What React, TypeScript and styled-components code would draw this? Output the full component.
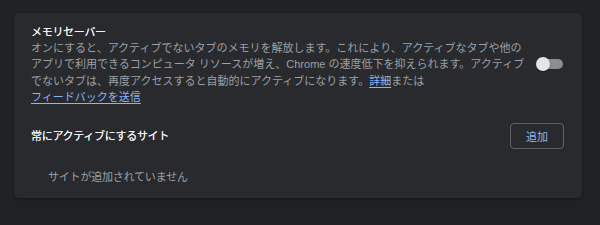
import React from 'react';
import styled, { createGlobalStyle } from 'styled-components';

const GlobalStyle = createGlobalStyle`
  html, body {
    margin: 0;
    padding: 0;
    background: #202124;
  }
  body {
    font-family: "Liberation Sans", "Noto Sans CJK JP", sans-serif;
    -webkit-font-smoothing: antialiased;
  }
`;

const Page = styled.div`
  width: 600px;
  height: 225px;
  padding: 13px 18px 0 14px;
  box-sizing: border-box;
  background: #202124;
`;

const Card = styled.section`
  background: #292a2d;
  border-radius: 5px;
  box-shadow: 0 1px 3px rgba(0, 0, 0, 0.35);
  padding: 0 17px 0 17px;
`;

const Row = styled.div<{ $minHeight?: number }>`
  display: flex;
  align-items: center;
  min-height: ${(p) => p.$minHeight ?? 0}px;
`;

const TopRow = styled(Row)`
  padding: 10px 0;
`;

const TextBlock = styled.div`
  flex: 1;
  min-width: 0;
  font-size: 11px;
  line-height: 16.5px;
`;

const Title = styled.div`
  color: #f1f3f4;
  font-weight: 400;
  padding-top: 1px;
  margin-bottom: -1px;
  letter-spacing: -0.3px;
  text-shadow: 0 0 0.3px #f1f3f4;
`;

const Desc = styled.div`
  color: #9aa0a6;
  white-space: nowrap;
`;

const Link = styled.a`
  color: #8ab4f8;
  text-decoration: underline;
  text-underline-offset: 2px;
  cursor: pointer;
`;

const Toggle = styled.div`
  position: relative;
  flex-shrink: 0;
  width: 26px;
  height: 10px;
  border-radius: 5px;
  background: #8a8d91;
  margin-left: 12px;
  margin-right: 2px;
`;

const Knob = styled.span`
  position: absolute;
  left: -1px;
  top: -2px;
  width: 14px;
  height: 14px;
  border-radius: 50%;
  background: #e3e5e8;
  box-shadow: 0 1px 2px rgba(0, 0, 0, 0.3);
`;

const Label = styled.div`
  flex: 1;
  color: #f1f3f4;
  font-size: 11px;
  line-height: 16.5px;
  padding-top: 2px;
  letter-spacing: -0.3px;
  text-shadow: 0 0 0.3px #f1f3f4;
`;

const AddButton = styled.button`
  flex-shrink: 0;
  width: 54px;
  height: 26px;
  margin-right: 1px;
  background: transparent;
  border: 1px solid #5f6368;
  border-radius: 4px;
  color: #8ab4f8;
  font-family: "Noto Sans CJK JP", sans-serif;
  font-size: 11px;
  font-weight: 400;
  padding: 0;
  cursor: pointer;
`;

const Empty = styled.div`
  padding: 13px 0 13px 17px;
  color: #9aa0a6;
  font-size: 11px;
  line-height: 16.5px;
  letter-spacing: -0.2px;
`;

const App: React.FC = () => {
  return (
    <>
      <GlobalStyle />
      <Page>
        <Card>
          <TopRow>
            <TextBlock>
              <Title>メモリセーバー</Title>
              <Desc>
                オンにすると、アクティブでないタブのメモリを解放します。これにより、アクティブなタブや他の
              </Desc>
              <Desc>
                アプリで利用できるコンピュータ リソースが増え、Chrome の速度低下を抑えられます。アクティブ
              </Desc>
              <Desc>
                でないタブは、再度アクセスすると自動的にアクティブになります。<Link>詳細</Link>または
              </Desc>
              <Desc>
                <Link>フィードバックを送信</Link>
              </Desc>
            </TextBlock>
            <Toggle>
              <Knob />
            </Toggle>
          </TopRow>
          <Row $minHeight={40}>
            <Label>常にアクティブにするサイト</Label>
            <AddButton>追加</AddButton>
          </Row>
          <Empty>サイトが追加されていません</Empty>
        </Card>
      </Page>
    </>
  );
};

export default App;
